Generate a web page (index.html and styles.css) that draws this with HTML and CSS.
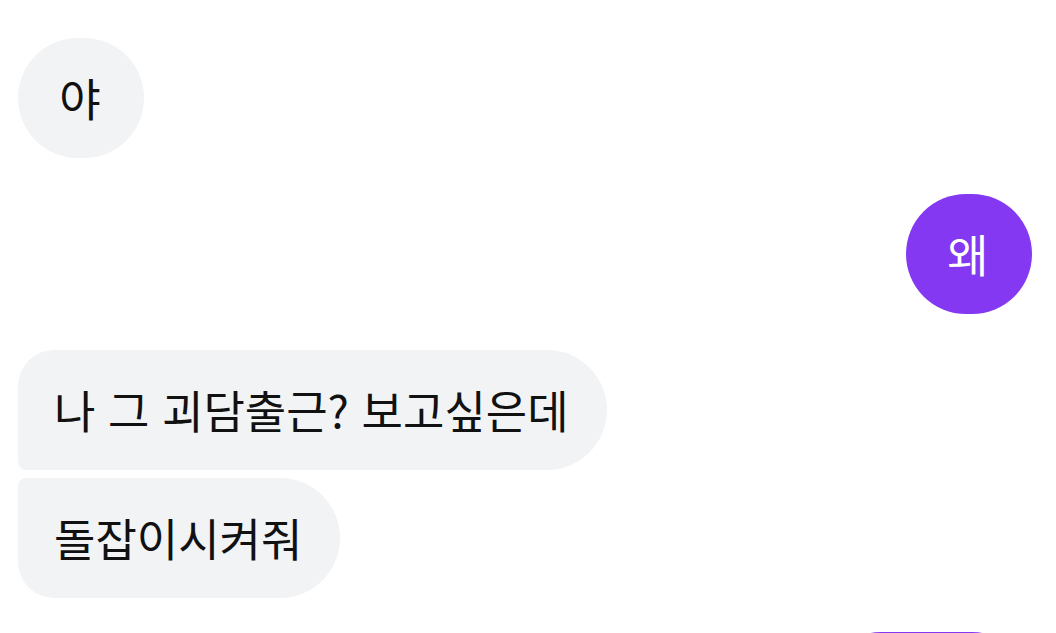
FILE: index.html
```html
<!DOCTYPE html>
<html lang="ko">
<head>
<meta charset="utf-8">
<link rel="stylesheet" href="styles.css">
</head>
<body>
<div class="chat">
  <div class="row in"><div class="bubble recv single">야</div></div>
  <div class="row out"><div class="bubble sent single">왜</div></div>
  <div class="group">
    <div class="row in"><div class="bubble recv first">나 그 괴담출근? 보고싶은데</div></div>
    <div class="row in"><div class="bubble recv last">돌잡이시켜줘</div></div>
  </div>
  <div class="row out next"><div class="bubble sent single wide"></div></div>
</div>
</body>
</html>
```
FILE: styles.css
```css
html, body {
  margin: 0;
  padding: 0;
  background: #ffffff;
  overflow: hidden;
}
.chat {
  display: flex;
  flex-direction: column;
  gap: 36px;
  padding: 38px 24px 0 18px;
  font-family: "Noto Sans CJK KR", "Noto Sans", sans-serif;
}
.group {
  display: flex;
  flex-direction: column;
  gap: 8px;
}
.row {
  display: flex;
}
.row.in { justify-content: flex-start; }
.row.out { justify-content: flex-end; }
.row.next { margin-top: -2px; }
.bubble {
  box-sizing: border-box;
  height: 120px;
  font-size: 45px;
  line-height: 60px;
  padding: 30px 38px 30px 36px;
  min-width: 126px;
  text-align: center;
  white-space: nowrap;
}
.recv {
  background: #f2f3f5;
  color: #111111;
}
.sent {
  background: #8438f2;
  color: #ffffff;
}
.single { border-radius: 60px; }
.first { border-radius: 36px 60px 60px 8px; }
.last { border-radius: 8px 60px 60px 36px; }
.wide { width: 211px; }
```
